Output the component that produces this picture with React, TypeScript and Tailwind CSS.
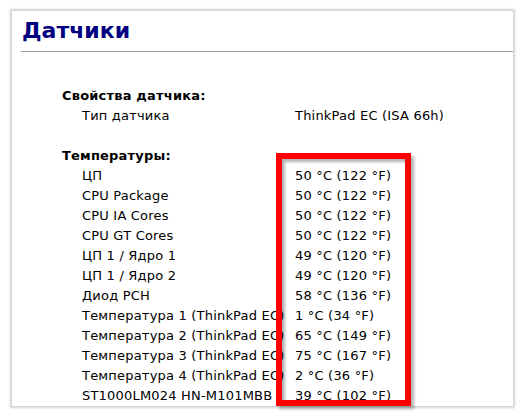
import React from "react";

const rows: [string, string][] = [
  ["ЦП", "50 °C (122 °F)"],
  ["CPU Package", "50 °C (122 °F)"],
  ["CPU IA Cores", "50 °C (122 °F)"],
  ["CPU GT Cores", "50 °C (122 °F)"],
  ["ЦП 1 / Ядро 1", "49 °C (120 °F)"],
  ["ЦП 1 / Ядро 2", "49 °C (120 °F)"],
  ["Диод PCH", "58 °C (136 °F)"],
  ["Температура 1 (ThinkPad EC)", "1 °C (34 °F)"],
  ["Температура 2 (ThinkPad EC)", "65 °C (149 °F)"],
  ["Температура 3 (ThinkPad EC)", "75 °C (167 °F)"],
  ["Температура 4 (ThinkPad EC)", "2 °C (36 °F)"],
  ["ST1000LM024 HN-M101MBB", "39 °C (102 °F)"],
];

function Row({ label, value }: { label: string; value: string }) {
  return (
    <div className="flex h-[20px] items-center">
      <div className="w-[283px] shrink-0 whitespace-nowrap overflow-hidden pl-[70px]">{label}</div>
      <div className="whitespace-nowrap">{value}</div>
    </div>
  );
}

export default function App() {
  return (
    <div className="w-[526px] h-[418px] bg-white pt-[11px] pl-[12px] overflow-hidden" style={{ fontFamily: '"DejaVu Sans", Verdana, sans-serif' }}>
      <div className="relative w-[501px] h-[395px] bg-white shadow-[0_0_2px_2px_#d4d4d4] text-[13px] tracking-[0.2px] text-black">
        <div className="pl-[10px] pt-[4px] h-[40px] text-[22px] font-bold tracking-normal text-[#000080] leading-[32px]">Датчики</div>
        <div className="ml-[9px] h-px bg-[#a0a0a0]" />
        <div className="pt-[34px]">
          <div className="flex h-[20px] items-center pl-[50px] font-bold">Свойства датчика:</div>
          <Row label="Тип датчика" value="ThinkPad EC (ISA 66h)" />
          <div className="h-[20px]" />
          <div className="flex h-[20px] items-center pl-[50px] font-bold">Температуры:</div>
          {rows.map(([l, v]) => (
            <Row key={l} label={l} value={v} />
          ))}
        </div>
        <div className="absolute left-[264px] top-[142px] w-[135px] h-[253px] border-[6px] border-[#ff0000] shadow-[3px_3px_3px_rgba(0,0,0,0.3),inset_3px_3px_3px_rgba(0,0,0,0.3)]" />
      </div>
    </div>
  );
}
